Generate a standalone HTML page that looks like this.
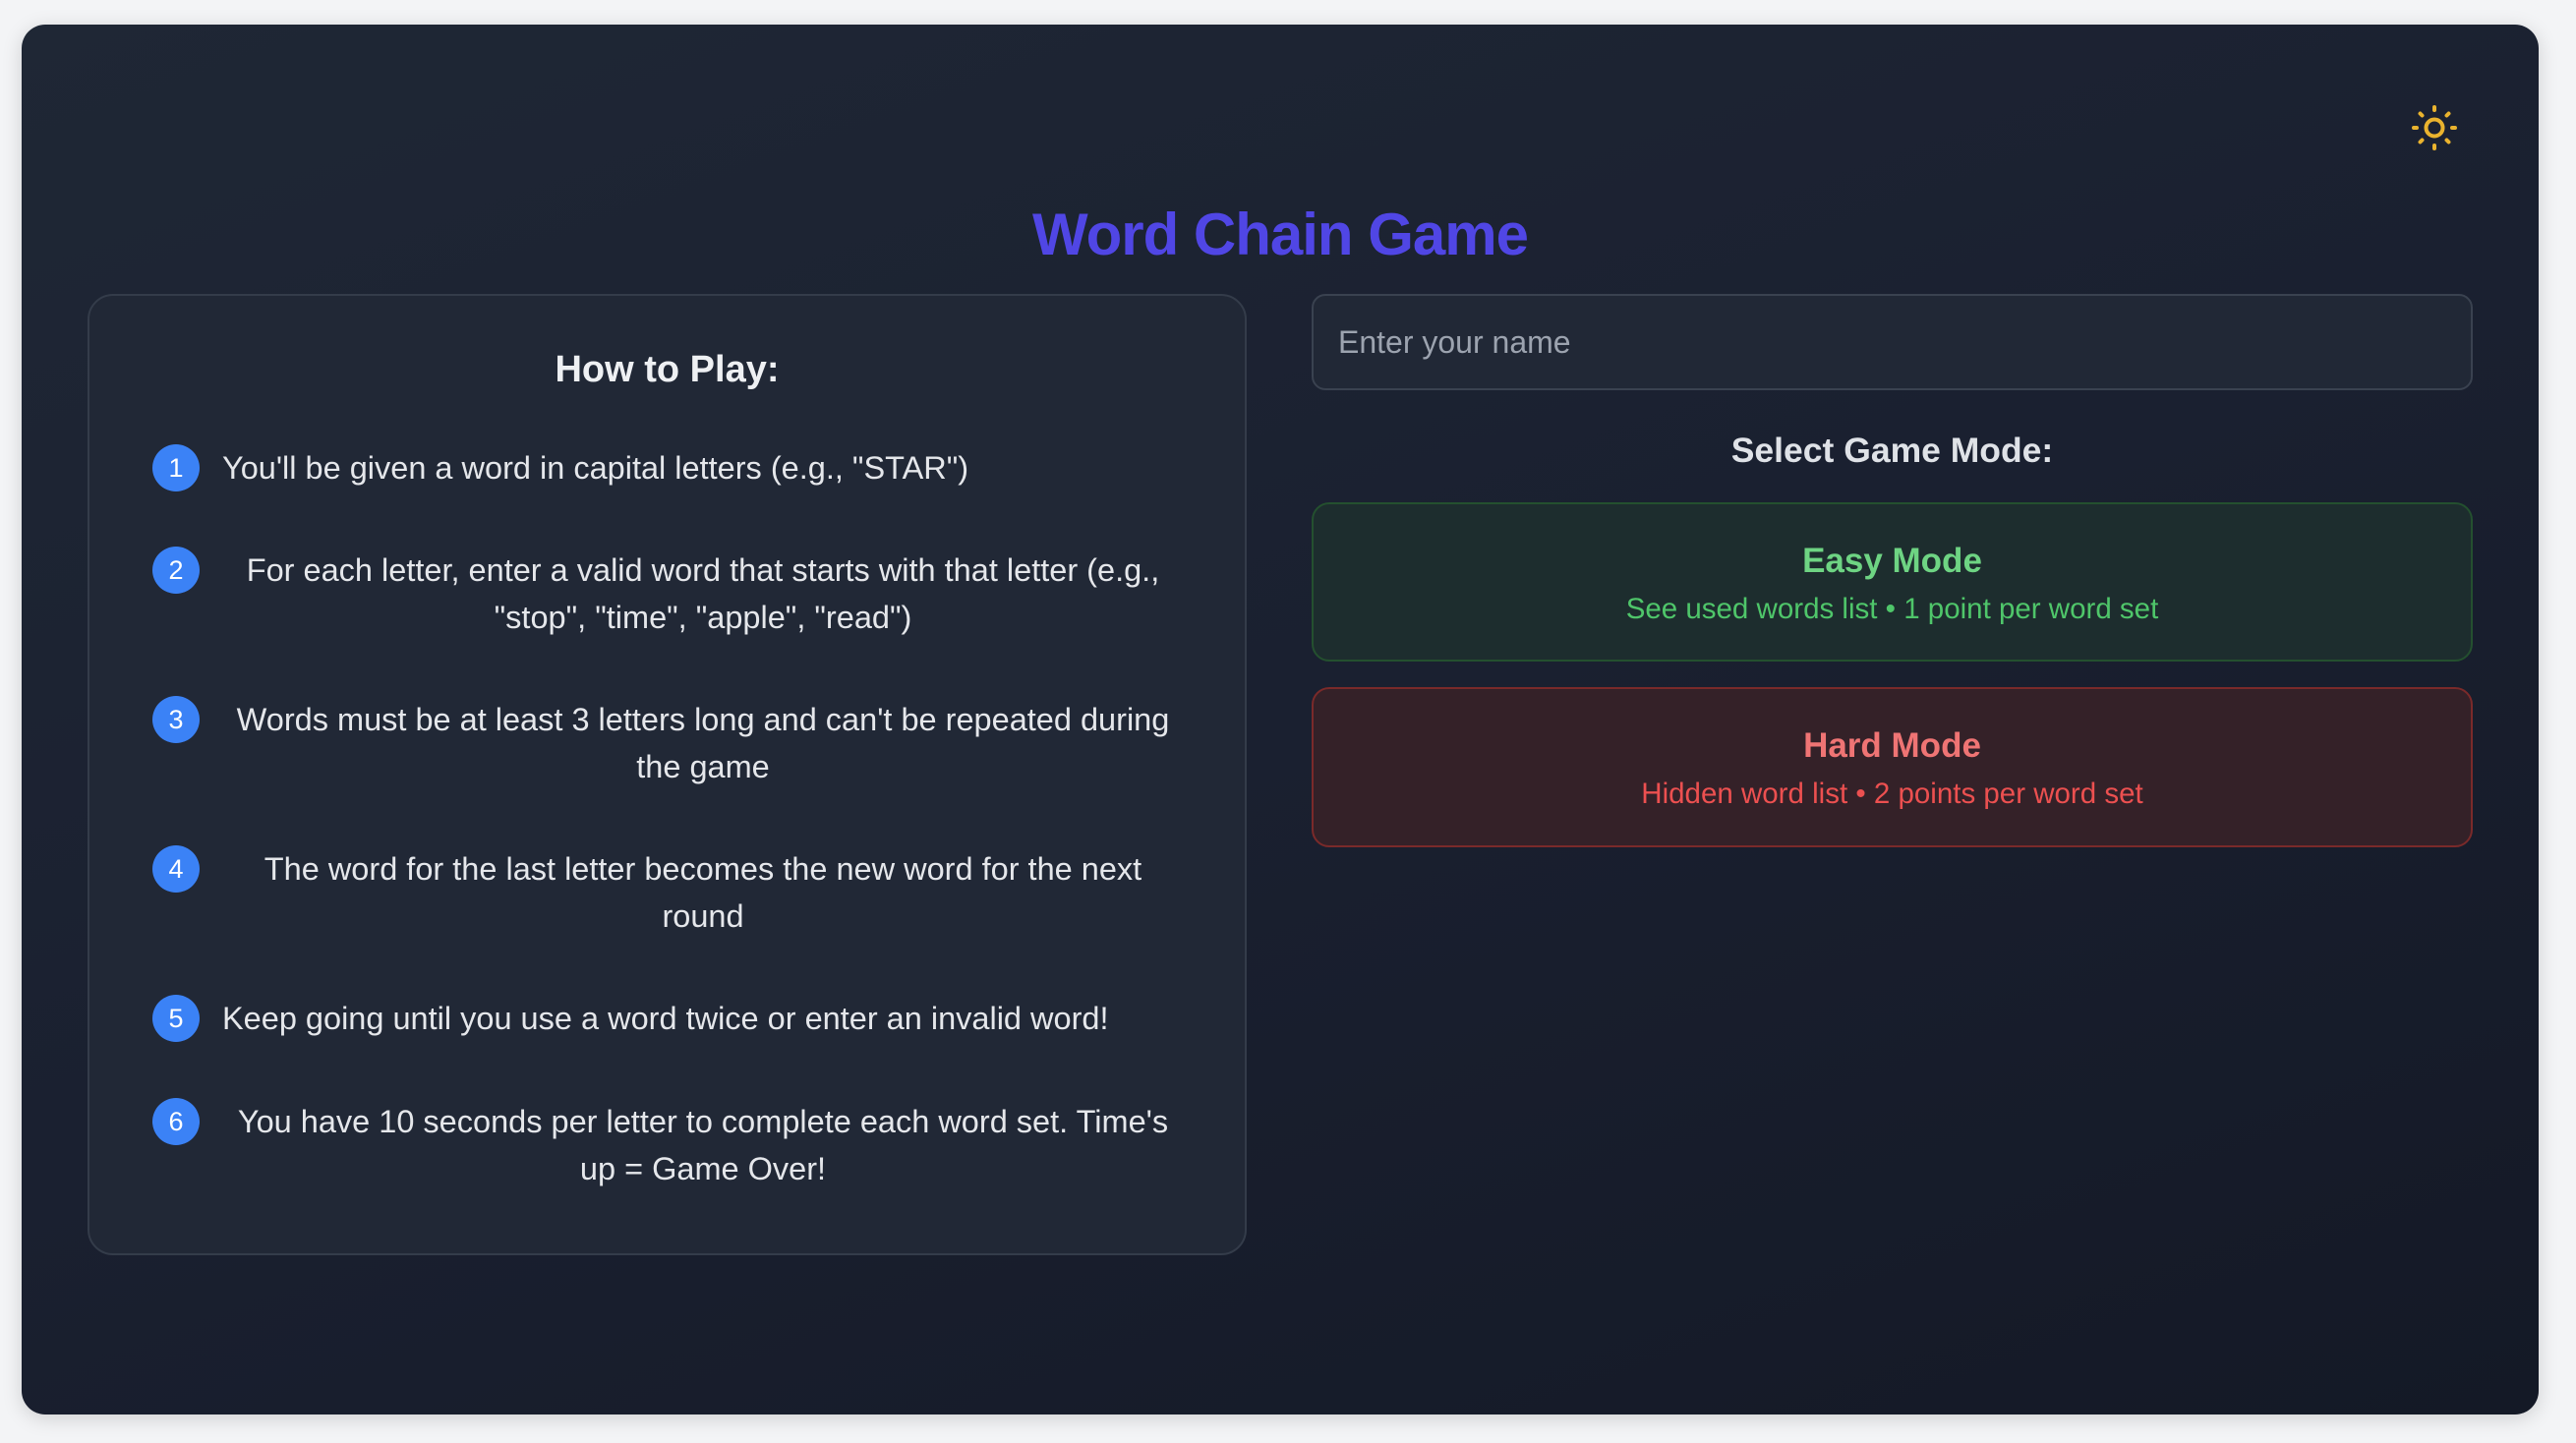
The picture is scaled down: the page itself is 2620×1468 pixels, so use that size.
<!DOCTYPE html>
<html><head><meta charset="utf-8"><style>
*{box-sizing:border-box;margin:0;padding:0}
body{width:2620px;height:1468px;background:#f3f4f6;font-family:"Liberation Sans",sans-serif;position:relative;overflow:hidden}
.card{position:absolute;left:22px;top:25px;width:2560px;height:1414px;border-radius:24px;background:linear-gradient(160deg,#1f2735 0%,#1a2030 50%,#141926 100%);box-shadow:0 4px 20px rgba(0,0,0,.15)}
h1{position:absolute;left:0;width:2604px;top:204px;text-align:center;font-size:60px;font-weight:bold;color:#5046e5;letter-spacing:-1px}
.panel{position:absolute;left:89px;top:299px;width:1179px;height:978px;border:2px solid #343c4a;border-radius:26px;background:#212836}
.item{position:absolute;left:155px;width:1050px}
.num{position:absolute;left:0;width:48px;height:48px;border-radius:50%;background:#3b82f6;color:#fff;font-size:27px;line-height:48px;text-align:center}
.txt{position:absolute;left:50px;width:1020px;text-align:center;font-size:32.5px;line-height:48px;color:#e5e7eb}
.txt.l{text-align:left;left:71px}
.input{position:absolute;left:1334px;top:299px;width:1181px;height:98px;border:2px solid #3a4250;border-radius:14px;background:#212836;color:#9ca3af;font-size:32px;line-height:94px;padding-left:25px}
.sel{position:absolute;left:1334px;width:1181px;top:438px;text-align:center;font-size:35.5px;font-weight:bold;color:#dfe2e7}
.mode{position:absolute;left:1334px;width:1181px;border-radius:18px;text-align:center}
.mode b{display:block;font-size:35px;margin-top:38px}
.mode span{display:block;font-size:29.5px;margin-top:12px}
</style></head><body>
<div class="card"></div>
<svg style="position:absolute;left:2446px;top:100px" width="60" height="60" viewBox="0 0 60 60" fill="none" stroke="#eab32e" stroke-width="4" stroke-linecap="round">
<circle cx="30" cy="30" r="8.5"/>
<path d="M30 9v3M30 48v3M9 30h3M48 30h3M15.5 15.5l2 2M42.5 42.5l2 2M15.5 44.5l2-2M42.5 17.5l2-2"/>
</svg>
<h1>Word Chain Game</h1>
<div class="panel"></div>
<div style="position:absolute;left:89px;width:1179px;top:355px;text-align:center;font-size:38px;font-weight:bold;color:#eef0f3">How to Play:</div>
<div class="item" style="top:452px"><div class="num">1</div><div class="txt l">You'll be given a word in capital letters (e.g., "STAR")</div></div>
<div class="item" style="top:556px"><div class="num">2</div><div class="txt">For each letter, enter a valid word that starts with that letter (e.g.,<br>"stop", "time", "apple", "read")</div></div>
<div class="item" style="top:708px"><div class="num">3</div><div class="txt">Words must be at least 3 letters long and can't be repeated during<br>the game</div></div>
<div class="item" style="top:860px"><div class="num">4</div><div class="txt">The word for the last letter becomes the new word for the next<br>round</div></div>
<div class="item" style="top:1012px"><div class="num">5</div><div class="txt l">Keep going until you use a word twice or enter an invalid word!</div></div>
<div class="item" style="top:1117px"><div class="num">6</div><div class="txt">You have 10 seconds per letter to complete each word set. Time's<br>up = Game Over!</div></div>
<div class="input">Enter your name</div>
<div class="sel">Select Game Mode:</div>
<div class="mode" style="top:511px;height:162px;background:#1d2d2e;border:2px solid #24502f"><b style="color:#6ed483">Easy Mode</b><span style="color:#4fc66a">See used words list • 1 point per word set</span></div>
<div class="mode" style="top:699px;height:163px;background:#342128;border:2px solid #7a2a2a"><b style="color:#ef7474">Hard Mode</b><span style="color:#ec5050">Hidden word list • 2 points per word set</span></div>
</body></html>
